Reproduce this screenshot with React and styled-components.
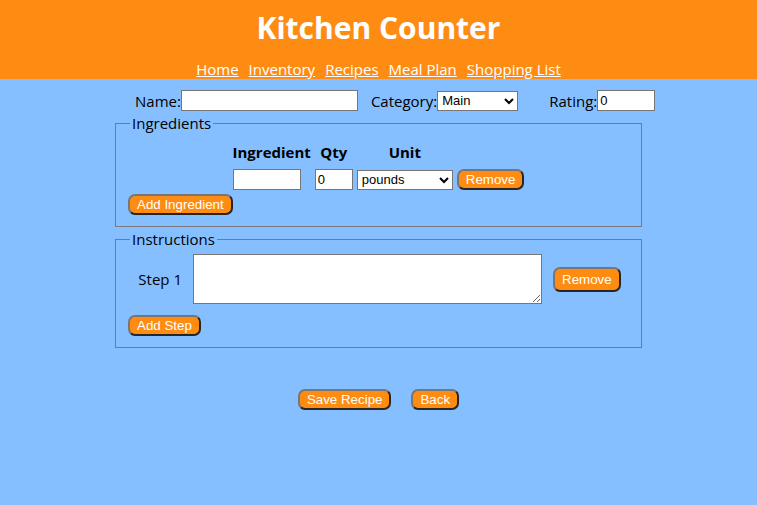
import styled, { createGlobalStyle } from "styled-components";

const GlobalStyle = createGlobalStyle`
  body {
    margin: 0;
    background: #85bfff;
    font-family: "Open Sans", "Noto Sans", sans-serif;
    font-size: 15px;
    color: #000;
  }
`;

const Header = styled.header`
  background: #ff8c12;
  height: 79px;
  display: flex;
  flex-direction: column;
  align-items: center;
`;

const Title = styled.h1`
  margin: 7px 0 0;
  color: #fff;
  font-size: 30px;
  font-weight: 700;
  line-height: 42px;
`;

const Nav = styled.nav`
  display: flex;
  gap: 10px;
  margin-top: 10px;
`;

const NavLink = styled.a`
  color: #fff;
  font-size: 15px;
  text-decoration: underline;
  line-height: 20px;
`;

const Main = styled.main`
  width: 527px;
  margin: 0 auto;
`;

const TopRow = styled.div`
  display: flex;
  align-items: center;
  margin-top: 11px;
  padding-left: 20px;
`;

const Field = styled.label`
  display: flex;
  align-items: center;
  margin-right: ${(p) => p.$gap || 0}px;
`;

const TextInput = styled.input`
  box-sizing: border-box;
  width: ${(p) => p.$w}px;
  height: 21px;
  border: 1px solid #767676;
  background: #fff;
  font-family: "Liberation Sans", Arial, sans-serif;
  font-size: 13px;
  padding: 1px 2px;
  border-radius: 0;
`;

const Select = styled.select`
  box-sizing: border-box;
  width: ${(p) => p.$w}px;
  height: 20px;
  border: 1px solid #767676;
  background: #fff;
  font-family: "Liberation Sans", Arial, sans-serif;
  font-size: 13px;
  border-radius: 0;
`;

const FieldSet = styled.fieldset`
  border: 1px solid #7a7a7a;
  margin: ${(p) => p.$mt}px 0 0;
  padding: 4px 12px 11px;
  min-width: 0;
`;

const Legend = styled.legend`
  padding: 0 2px;
  margin-left: 2px;
  line-height: 18px;
`;

const IngTable = styled.table`
  margin: 6px auto 0;
  border-collapse: separate;
  border-spacing: 4px 0;
`;

const Th = styled.th`
  font-weight: 700;
  font-size: 15px;
  padding: 0 0 6px;
  text-align: center;
  line-height: 20px;
`;

const Td = styled.td`
  padding: 0;
  text-align: ${(p) => p.$align || "center"};
  vertical-align: middle;
`;

const Button = styled.button`
  background: #ff8c12;
  color: #fff;
  font-family: "Liberation Sans", Arial, sans-serif;
  font-size: 13.33px;
  height: ${(p) => p.$h || 21}px;
  padding: 0 7px;
  border: 2px solid;
  border-color: #767676 #262626 #262626 #767676;
  border-radius: 7px;
  cursor: pointer;
`;

const LeftRow = styled.div`
  margin-top: ${(p) => p.$mt}px;
`;

const StepRow = styled.div`
  display: flex;
  align-items: center;
  justify-content: center;
  gap: 11px;
  margin-top: 2px;
  padding-left: 2px;
`;

const TextArea = styled.textarea`
  box-sizing: border-box;
  width: 349px;
  height: 50px;
  border: 1px solid #767676;
  background: #fff;
  resize: both;
`;

const Actions = styled.div`
  display: flex;
  justify-content: center;
  gap: 20px;
  margin-top: 41px;
`;

export default function App() {
  return (
    <>
      <GlobalStyle />
      <Header>
        <Title>Kitchen Counter</Title>
        <Nav>
          <NavLink href="#">Home</NavLink>
          <NavLink href="#">Inventory</NavLink>
          <NavLink href="#">Recipes</NavLink>
          <NavLink href="#">Meal Plan</NavLink>
          <NavLink href="#">Shopping List</NavLink>
        </Nav>
      </Header>
      <Main>
        <TopRow>
          <Field $gap={13}>
            Name:
            <TextInput $w={177} />
          </Field>
          <Field $gap={31}>
            Category:
            <Select $w={81} defaultValue="Main">
              <option>Main</option>
              <option>Side</option>
              <option>Dessert</option>
            </Select>
          </Field>
          <Field>
            Rating:
            <TextInput $w={58} defaultValue="0" />
          </Field>
        </TopRow>
        <FieldSet $mt={3}>
          <Legend>Ingredients</Legend>
          <IngTable>
            <thead>
              <tr>
                <Th>Ingredient</Th>
                <Th>Qty</Th>
                <Th>Unit</Th>
                <Th />
              </tr>
            </thead>
            <tbody>
              <tr>
                <Td $align="left">
                  <TextInput $w={68} />
                </Td>
                <Td>
                  <TextInput $w={38} defaultValue="0" />
                </Td>
                <Td>
                  <Select $w={96} defaultValue="pounds">
                    <option>pounds</option>
                    <option>ounces</option>
                    <option>cups</option>
                  </Select>
                </Td>
                <Td>
                  <Button>Remove</Button>
                </Td>
              </tr>
            </tbody>
          </IngTable>
          <LeftRow $mt={3}>
            <Button>Add Ingredient</Button>
          </LeftRow>
        </FieldSet>
        <FieldSet $mt={3}>
          <Legend>Instructions</Legend>
          <StepRow>
            <span>Step 1</span>
            <TextArea />
            <Button $h={25}>Remove</Button>
          </StepRow>
          <LeftRow $mt={10}>
            <Button>Add Step</Button>
          </LeftRow>
        </FieldSet>
        <Actions>
          <Button>Save Recipe</Button>
          <Button>Back</Button>
        </Actions>
      </Main>
    </>
  );
}
